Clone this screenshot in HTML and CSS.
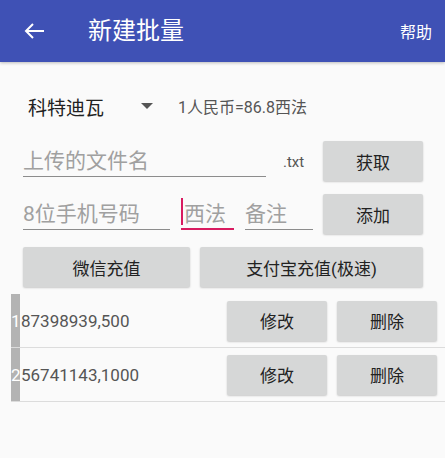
FILE: index.html
```html
<!DOCTYPE html>
<html lang="zh">
<head>
    <meta charset="UTF-8">
    <meta name="viewport" content="width=device-width, initial-scale=1.0">
    <title>新建批量</title>
    <link rel="stylesheet" href="styles.css">
</head>
<body>

    <header class="appbar">
        <svg class="back" width="20" height="16" viewBox="0 0 20 16">
            <path d="M20 8H2M9 1L2 8l7 7" fill="none" stroke="#fff" stroke-width="2"/>
        </svg>
        <h1>新建批量</h1>
        <span class="help">帮助</span>
    </header>

    <main>
        <section class="form">
            <div class="row spinner-row">
                <div class="spinner">
                    <span>科特迪瓦</span>
                    <i class="caret"></i>
                </div>
                <span class="rate">1人民币=86.8西法</span>
            </div>

            <div class="row">
                <div class="field file"><span class="hint">上传的文件名</span></div>
                <span class="ext">.txt</span>
                <button class="btn push">获取</button>
            </div>

            <div class="row">
                <div class="field phone"><span class="hint">8位手机号码</span></div>
                <div class="field amount focused"><i class="cursor"></i><span class="hint">西法</span></div>
                <div class="field note"><span class="hint">备注</span></div>
                <button class="btn push">添加</button>
            </div>

            <div class="row pay-row">
                <button class="btn wechat">微信充值</button>
                <button class="btn alipay">支付宝充值(极速)</button>
            </div>
        </section>

        <ul class="list">
            <li class="item">
                <span class="num">1</span>
                <span class="entry">87398939,500</span>
                <button class="btn small">修改</button>
                <button class="btn small">删除</button>
            </li>
            <li class="item">
                <span class="num">2</span>
                <span class="entry">56741143,1000</span>
                <button class="btn small">修改</button>
                <button class="btn small">删除</button>
            </li>
        </ul>
    </main>

</body>
</html>
```

FILE: styles.css
```css
body {
    margin: 0;
    background: #fafafa;
    font-family: Roboto, "Noto Sans CJK SC", sans-serif;
    color: #212121;
}

.appbar {
    display: flex;
    align-items: center;
    height: 62px;
    padding: 0 13px 0 24px;
    background: #3f51b5;
    color: #fff;
    box-shadow: 0 1px 3px rgba(0, 0, 0, 0.25);
}

.appbar h1 {
    margin: 0 0 0 44px;
    font-size: 24px;
    font-weight: 400;
    line-height: 1;
}

.help {
    margin-left: auto;
    font-size: 16px;
}

.form {
    padding: 22px 22px 0 23px;
}

.row {
    display: flex;
    align-items: flex-start;
    margin-bottom: 13px;
}

.spinner-row {
    align-items: center;
    height: 44px;
    margin-bottom: 13px;
}

.spinner {
    display: flex;
    align-items: center;
    width: 125px;
    padding-left: 5px;
    font-size: 19px;
}

.caret {
    margin-left: auto;
    border-left: 6px solid transparent;
    border-right: 6px solid transparent;
    border-top: 6px solid #555;
}

.rate {
    margin-left: 25px;
    font-size: 16px;
    color: #555;
}

.field {
    display: flex;
    align-items: center;
    height: 34px;
    padding-top: 1px;
    border-bottom: 1px solid #8c8c8c;
    font-size: 21px;
    position: relative;
}

.hint {
    color: #a0a0a0;
}

.file {
    width: 243px;
}

.ext {
    margin: 12px 0 0 17px;
    font-size: 15px;
    color: #555;
}

.phone {
    width: 147px;
}

.amount {
    width: 50px;
    margin-left: 11px;
    padding-left: 3px;
}

.focused {
    border-bottom: 2px solid #d81b60;
    height: 33px;
}

.cursor {
    position: absolute;
    left: 0;
    top: 4px;
    width: 2px;
    height: 27px;
    background: #d81b60;
}

.note {
    width: 68px;
    margin-left: 11px;
}

.btn {
    height: 40px;
    border: none;
    border-radius: 2px;
    background: #d6d7d7;
    box-shadow: 0 1px 2px rgba(0, 0, 0, 0.2);
    font-family: inherit;
    font-size: 17px;
    color: #222;
    padding: 0;
}

.push {
    width: 100px;
    margin-left: auto;
}

.pay-row {
    gap: 10px;
    margin-bottom: 7px;
}

.wechat {
    width: 167px;
}

.alipay {
    flex: 1;
}

.list {
    list-style: none;
    margin: 0 0 0 11px;
    padding: 0;
}

.item {
    display: flex;
    align-items: center;
    height: 53px;
    padding-right: 8px;
    border-bottom: 1px solid #dcdcdc;
}

.num {
    align-self: stretch;
    display: flex;
    align-items: center;
    width: 9px;
    background: #b3b3b3;
    color: #fff;
    font-size: 17px;
    white-space: nowrap;
}

.entry {
    margin-left: 1px;
    font-size: 17px;
    color: #555;
}

.small {
    width: 100px;
    margin-left: 10px;
}

.entry + .small {
    margin-left: auto;
}
```
